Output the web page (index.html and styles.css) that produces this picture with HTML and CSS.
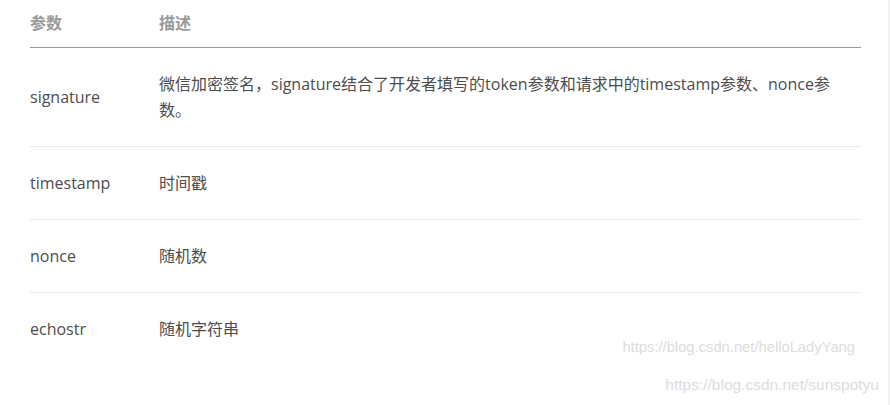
FILE: index.html
```html
<!DOCTYPE html>
<html lang="zh">
<head>
<meta charset="utf-8">
<link rel="stylesheet" href="styles.css">
</head>
<body>
<div class="page">
  <table class="params">
    <thead>
      <tr><th class="c1">参数</th><th>描述</th></tr>
    </thead>
    <tbody>
      <tr><td class="c1">signature</td><td>微信加密签名，signature结合了开发者填写的token参数和请求中的timestamp参数、nonce参数。</td></tr>
      <tr><td class="c1">timestamp</td><td>时间戳</td></tr>
      <tr><td class="c1">nonce</td><td>随机数</td></tr>
      <tr><td class="c1">echostr</td><td>随机字符串</td></tr>
    </tbody>
  </table>
  <div class="marks">
    <span class="mark m1">https://blog.csdn.net/helloLadyYang</span>
    <span class="mark m2">https://blog.csdn.net/sunspotyu</span>
  </div>
</div>
</body>
</html>
```
FILE: styles.css
```css
html, body {
  margin: 0;
  padding: 0;
  background: #fff;
}
body {
  width: 890px;
  height: 405px;
  overflow: hidden;
  box-sizing: border-box;
  border-right: 2px solid #f3f3f3;
}
.page {
  padding: 10px 27px 0 30px;
  font-family: "Open Sans", "Noto Sans CJK SC", sans-serif;
  font-size: 16px;
  color: #4d4d4d;
}
.params {
  width: 100%;
  border-collapse: collapse;
}
.params th {
  text-align: left;
  font-weight: bold;
  color: #999;
  line-height: 26px;
  padding: 0 0 11px 0;
  border-bottom: 1px solid #999;
}
.params td {
  line-height: 26px;
  padding: 23px 0;
  border-bottom: 1px solid #e8e8e8;
  vertical-align: middle;
}
.params tr:last-child td {
  border-bottom: none;
}
.c1 {
  width: 129px;
}
.marks {
  display: flex;
  flex-direction: column;
  align-items: flex-end;
  margin-top: -26px;
  font-family: "Liberation Sans", Arial, sans-serif;
  color: #dcdcdc;
}
.m1 { margin-right: 6px; font-size: 14.75px; }
.m2 { margin-right: -18px; margin-top: 21px; font-size: 15.5px; }
```
